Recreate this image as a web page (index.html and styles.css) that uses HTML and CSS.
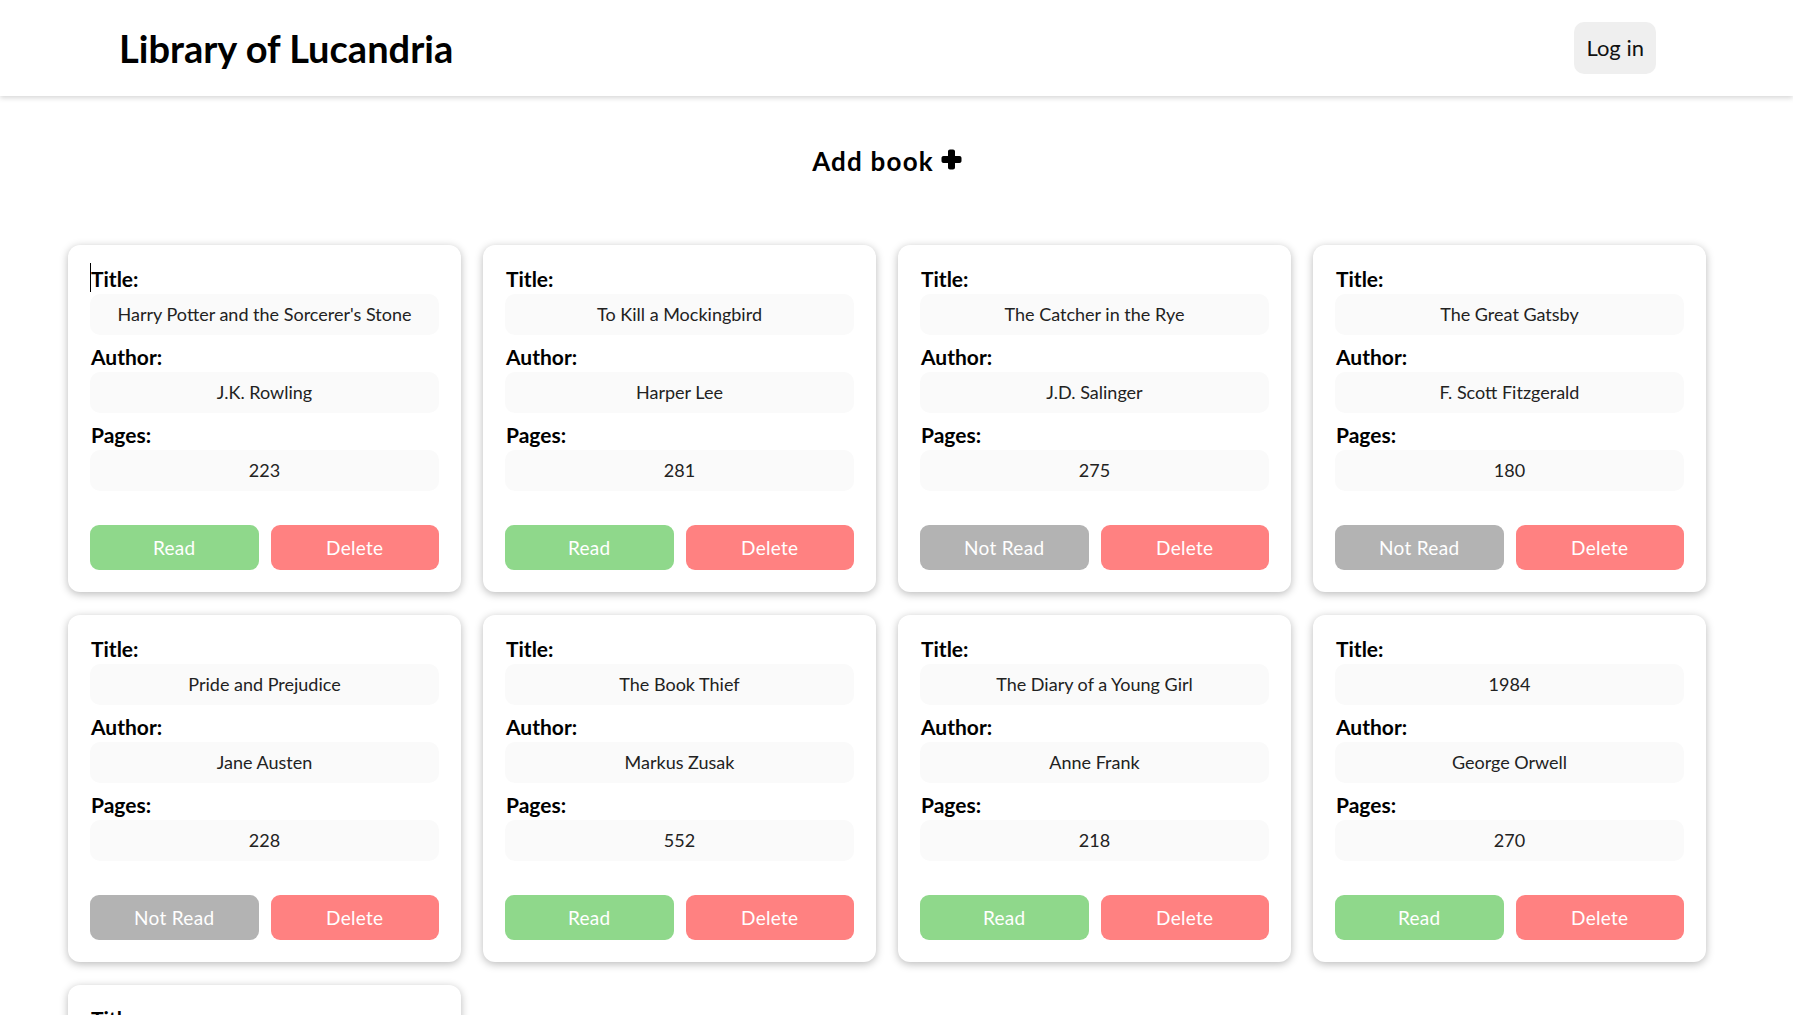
FILE: index.html
```html
<!DOCTYPE html>
<html lang="en">
<head>
<meta charset="utf-8">
<title>Library of Lucandria</title>
<link rel="stylesheet" href="styles.css">
</head>
<body>
<header class="topbar">
  <h1 class="brand">Library of Lucandria</h1>
  <button class="login">Log in</button>
</header>
<main class="main">
  <div class="add-row">
    <button class="add-book">Add book
      <svg class="plus" viewBox="0 0 21 21" width="21" height="21" aria-hidden="true">
        <path d="M9 0.5h3c1.1 0 2 0.9 2 2V7h4.5c1.1 0 2 0.9 2 2v3c0 1.1-0.9 2-2 2H14v4.5c0 1.1-0.9 2-2 2H9c-1.1 0-2-0.9-2-2V14H2.5c-1.1 0-2-0.9-2-2V9c0-1.1 0.9-2 2-2H7V2.5c0-1.1 0.9-2 2-2z" fill="#000"/>
      </svg>
    </button>
  </div>
  <section class="grid">
    <article class="card">
      <div class="label first"><span class="caret"></span>Title:</div>
      <div class="value">Harry Potter and the Sorcerer's Stone</div>
      <div class="label">Author:</div>
      <div class="value">J.K. Rowling</div>
      <div class="label">Pages:</div>
      <div class="value">223</div>
      <div class="actions"><button class="btn read">Read</button><button class="btn delete">Delete</button></div>
    </article>
    <article class="card">
      <div class="label first">Title:</div>
      <div class="value">To Kill a Mockingbird</div>
      <div class="label">Author:</div>
      <div class="value">Harper Lee</div>
      <div class="label">Pages:</div>
      <div class="value">281</div>
      <div class="actions"><button class="btn read">Read</button><button class="btn delete">Delete</button></div>
    </article>
    <article class="card">
      <div class="label first">Title:</div>
      <div class="value">The Catcher in the Rye</div>
      <div class="label">Author:</div>
      <div class="value">J.D. Salinger</div>
      <div class="label">Pages:</div>
      <div class="value">275</div>
      <div class="actions"><button class="btn not-read">Not Read</button><button class="btn delete">Delete</button></div>
    </article>
    <article class="card">
      <div class="label first">Title:</div>
      <div class="value">The Great Gatsby</div>
      <div class="label">Author:</div>
      <div class="value">F. Scott Fitzgerald</div>
      <div class="label">Pages:</div>
      <div class="value">180</div>
      <div class="actions"><button class="btn not-read">Not Read</button><button class="btn delete">Delete</button></div>
    </article>
    <article class="card">
      <div class="label first">Title:</div>
      <div class="value">Pride and Prejudice</div>
      <div class="label">Author:</div>
      <div class="value">Jane Austen</div>
      <div class="label">Pages:</div>
      <div class="value">228</div>
      <div class="actions"><button class="btn not-read">Not Read</button><button class="btn delete">Delete</button></div>
    </article>
    <article class="card">
      <div class="label first">Title:</div>
      <div class="value">The Book Thief</div>
      <div class="label">Author:</div>
      <div class="value">Markus Zusak</div>
      <div class="label">Pages:</div>
      <div class="value">552</div>
      <div class="actions"><button class="btn read">Read</button><button class="btn delete">Delete</button></div>
    </article>
    <article class="card">
      <div class="label first">Title:</div>
      <div class="value">The Diary of a Young Girl</div>
      <div class="label">Author:</div>
      <div class="value">Anne Frank</div>
      <div class="label">Pages:</div>
      <div class="value">218</div>
      <div class="actions"><button class="btn read">Read</button><button class="btn delete">Delete</button></div>
    </article>
    <article class="card">
      <div class="label first">Title:</div>
      <div class="value">1984</div>
      <div class="label">Author:</div>
      <div class="value">George Orwell</div>
      <div class="label">Pages:</div>
      <div class="value">270</div>
      <div class="actions"><button class="btn read">Read</button><button class="btn delete">Delete</button></div>
    </article>
    <article class="card">
      <div class="label first">Title:</div>
      <div class="value">The Hobbit</div>
      <div class="label">Author:</div>
      <div class="value">J.R.R. Tolkien</div>
      <div class="label">Pages:</div>
      <div class="value">310</div>
      <div class="actions"><button class="btn read">Read</button><button class="btn delete">Delete</button></div>
    </article>
  </section>
</main>
</body>
</html>
```

FILE: styles.css
```css
html {
  scrollbar-width: none;
}
html::-webkit-scrollbar {
  display: none;
}
* {
  box-sizing: border-box;
}
body {
  margin: 0;
  background: #ffffff;
  color: #000000;
  font-family: Lato, "Open Sans", "Liberation Sans", sans-serif;
}
button {
  font-family: inherit;
  cursor: pointer;
}
.topbar {
  height: 96px;
  display: flex;
  align-items: center;
  justify-content: space-between;
  padding: 0 137px 0 119px;
  background: #ffffff;
  box-shadow: 0 2px 5px rgba(0, 0, 0, 0.16);
  position: relative;
  z-index: 1;
}
.brand {
  margin: 0;
  font-size: 38px;
  font-weight: 700;
  line-height: 46px;
  margin-bottom: 1px;
}
.login {
  height: 52px;
  padding: 0 12px 1px;
  border: none;
  border-radius: 10px;
  background: #efefef;
  color: #111111;
  font-size: 22px;
  font-weight: 400;
  margin-bottom: 1px;
}
.main {
  padding: 0 87px 40px 68px;
}
.add-row {
  display: flex;
  justify-content: center;
  padding-top: 45px;
  height: 149px;
}
.add-book {
  display: flex;
  align-items: center;
  gap: 7px;
  height: 40px;
  padding: 0;
  border: none;
  background: none;
  color: #000;
  font-size: 26px;
  font-weight: 700;
  letter-spacing: 1.2px;
}
.plus {
  display: block;
  margin-bottom: 4px;
}
.grid {
  display: grid;
  grid-template-columns: repeat(4, 393px);
  gap: 23px 22px;
}
.card {
  display: flex;
  flex-direction: column;
  padding: 22px;
  background: #ffffff;
  border-radius: 12px;
  box-shadow: 0 2px 9px rgba(0, 0, 0, 0.28);
}
.label {
  position: relative;
  height: 23px;
  line-height: 23px;
  margin: 10px 0 4px 1px;
  font-size: 21px;
  font-weight: 700;
}
.label.first {
  margin-top: 0;
}
.caret {
  position: absolute;
  left: -1px;
  top: -4px;
  width: 1px;
  height: 29px;
  background: #000;
}
.value {
  height: 41px;
  line-height: 41px;
  border-radius: 10px;
  background: #fafafa;
  text-align: center;
  font-size: 18px;
  font-weight: 400;
  color: #222222;
  white-space: nowrap;
  overflow: hidden;
}
.actions {
  display: grid;
  grid-template-columns: 1fr 1fr;
  gap: 12px;
  margin-top: 34px;
}
.btn {
  height: 45px;
  border: none;
  border-radius: 9px;
  color: #ffffff;
  font-size: 19px;
  font-weight: 400;
  letter-spacing: 0.3px;
}
.btn.read {
  background: #8fd88b;
}
.btn.not-read {
  background: #b3b3b3;
}
.btn.delete {
  background: #ff8181;
}
```
